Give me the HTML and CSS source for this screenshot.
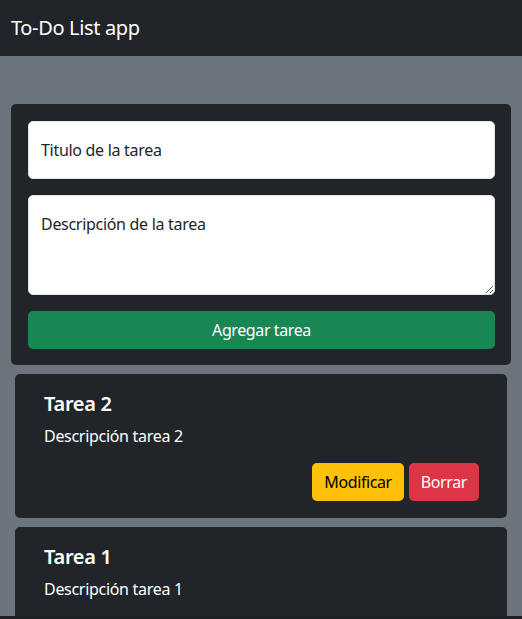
FILE: index.html
```html
<!DOCTYPE html>
<html lang="es">
<head>
<meta charset="utf-8">
<title>To-Do List app</title>
<link rel="stylesheet" href="styles.css">
</head>
<body>
<nav class="navbar">
  <span class="brand">To-Do List app</span>
</nav>
<main class="main">
  <form class="form-card">
    <input class="control" type="text" placeholder="Titulo de la tarea">
    <textarea class="control area" placeholder="Descripción de la tarea"></textarea>
    <button type="button" class="btn btn-success">Agregar tarea</button>
  </form>
  <section class="list">
    <article class="task">
      <h5 class="task-title">Tarea 2</h5>
      <p class="task-desc">Descripción tarea 2</p>
      <div class="actions">
        <button type="button" class="btn btn-small btn-warning">Modificar</button>
        <button type="button" class="btn btn-small btn-danger">Borrar</button>
      </div>
    </article>
    <article class="task">
      <h5 class="task-title">Tarea 1</h5>
      <p class="task-desc">Descripción tarea 1</p>
      <div class="actions">
        <button type="button" class="btn btn-small btn-warning">Modificar</button>
        <button type="button" class="btn btn-small btn-danger">Borrar</button>
      </div>
    </article>
  </section>
</main>
<footer class="footer"></footer>
</body>
</html>
```
FILE: styles.css
```css
* { box-sizing: border-box; }
html, body { margin: 0; padding: 0; }
body {
  background: #6c757d;
  font-family: "Noto Sans", "Open Sans", sans-serif;
  font-size: 16px;
  line-height: 1.5;
  color: #212529;
  overflow: hidden;
}
.navbar {
  background: #212529;
  height: 56px;
  display: flex;
  align-items: center;
  padding: 0 11px;
}
.brand {
  color: #fff;
  font-size: 20px;
  line-height: 30px;
  letter-spacing: -0.35px;
}
.main {
  padding: 48px 11px 0;
}
.form-card {
  background: #212529;
  border-radius: 5px;
  padding: 17px 16px 16px 17px;
  display: flex;
  flex-direction: column;
  gap: 16px;
  margin: 0;
}
.control {
  display: block;
  width: 100%;
  font-family: inherit;
  font-size: 16px;
  line-height: 24px;
  letter-spacing: -0.3px;
  padding: 16px 12px;
  border: 1px solid #dee2e6;
  border-radius: 5px;
  background: #fff;
  color: #212529;
  margin: 0;
}
.control::placeholder { color: #212529; opacity: 1; }
.area { height: 100px; resize: vertical; }
.btn {
  font-family: inherit;
  font-size: 16px;
  line-height: 24px;
  letter-spacing: -0.4px;
  padding: 6px 12px;
  border: 1px solid transparent;
  border-radius: 5px;
  cursor: pointer;
}
.btn-small { padding: 6px 11px; }
.btn-success { background: #198754; color: #fff; width: 100%; }
.btn-warning { background: #ffc107; color: #000; }
.btn-danger { background: #dc3545; color: #fff; }
.list {
  padding: 9px 4px 0;
  display: flex;
  flex-direction: column;
  gap: 9px;
}
.task {
  background: #212529;
  border-radius: 5px;
  padding: 18px 28px 17px 29px;
  color: #fff;
}
.task-title {
  margin: 0 0 8px;
  font-size: 20px;
  font-weight: 600;
  line-height: 24px;
  letter-spacing: -0.3px;
}
.task-desc {
  margin: 0 0 15px;
  font-size: 16px;
  line-height: 24px;
  letter-spacing: -0.3px;
}
.actions {
  display: flex;
  justify-content: flex-end;
  gap: 5px;
}
.footer {
  position: fixed;
  left: 0;
  right: 0;
  bottom: 0;
  height: 3px;
  background: #1e2023;
}
```
